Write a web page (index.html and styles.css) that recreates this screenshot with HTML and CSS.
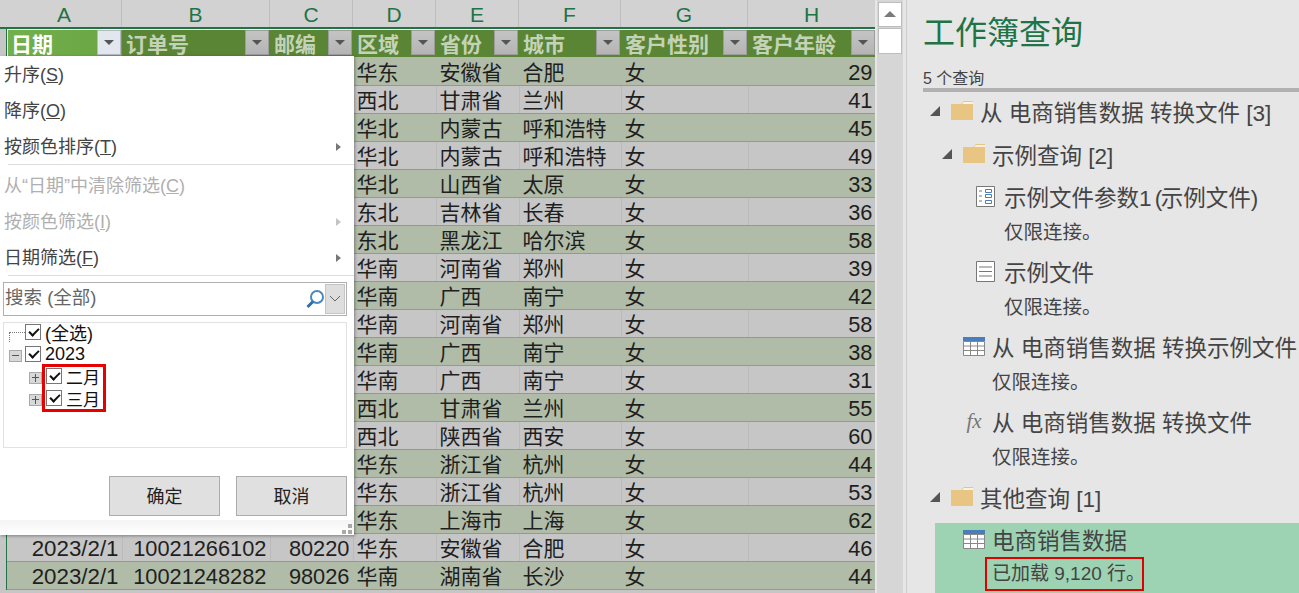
FILE: index.html
```html
<!DOCTYPE html>
<html lang="zh-CN">
<head>
<meta charset="utf-8">
<title>工作簿查询</title>
<link rel="stylesheet" href="styles.css">
</head>
<body>
<div class="app">
  <section class="sheet">
    <div class="col-head">
      <div class="corner"></div>
      <div class="ch a active">A</div><div class="ch b">B</div><div class="ch c">C</div><div class="ch d">D</div><div class="ch e">E</div><div class="ch f">F</div><div class="ch g">G</div><div class="ch h">H</div>
    </div>
    <div class="table-wrap">
      <table class="grid">
        <colgroup><col class="a"><col class="b"><col class="c"><col class="d"><col class="e"><col class="f"><col class="g"><col class="h"></colgroup>
        <thead><tr>
          <th class="active-th"><span>日期</span><i class="fbtn on"></i></th>
          <th><span>订单号</span><i class="fbtn"></i></th>
          <th><span>邮编</span><i class="fbtn"></i></th>
          <th><span>区域</span><i class="fbtn"></i></th>
          <th><span>省份</span><i class="fbtn"></i></th>
          <th><span>城市</span><i class="fbtn"></i></th>
          <th><span>客户性别</span><i class="fbtn"></i></th>
          <th><span>客户年龄</span><i class="fbtn"></i></th>
        </tr></thead>
        <tbody>
          <tr><td></td><td></td><td></td><td>华东</td><td>安徽省</td><td>合肥</td><td>女</td><td class="n">29</td></tr>
          <tr><td></td><td></td><td></td><td>西北</td><td>甘肃省</td><td>兰州</td><td>女</td><td class="n">41</td></tr>
          <tr><td></td><td></td><td></td><td>华北</td><td>内蒙古</td><td>呼和浩特</td><td>女</td><td class="n">45</td></tr>
          <tr><td></td><td></td><td></td><td>华北</td><td>内蒙古</td><td>呼和浩特</td><td>女</td><td class="n">49</td></tr>
          <tr><td></td><td></td><td></td><td>华北</td><td>山西省</td><td>太原</td><td>女</td><td class="n">33</td></tr>
          <tr><td></td><td></td><td></td><td>东北</td><td>吉林省</td><td>长春</td><td>女</td><td class="n">36</td></tr>
          <tr><td></td><td></td><td></td><td>东北</td><td>黑龙江</td><td>哈尔滨</td><td>女</td><td class="n">58</td></tr>
          <tr><td></td><td></td><td></td><td>华南</td><td>河南省</td><td>郑州</td><td>女</td><td class="n">39</td></tr>
          <tr><td></td><td></td><td></td><td>华南</td><td>广西</td><td>南宁</td><td>女</td><td class="n">42</td></tr>
          <tr><td></td><td></td><td></td><td>华南</td><td>河南省</td><td>郑州</td><td>女</td><td class="n">58</td></tr>
          <tr><td></td><td></td><td></td><td>华南</td><td>广西</td><td>南宁</td><td>女</td><td class="n">38</td></tr>
          <tr><td></td><td></td><td></td><td>华南</td><td>广西</td><td>南宁</td><td>女</td><td class="n">31</td></tr>
          <tr><td></td><td></td><td></td><td>西北</td><td>甘肃省</td><td>兰州</td><td>女</td><td class="n">55</td></tr>
          <tr><td></td><td></td><td></td><td>西北</td><td>陕西省</td><td>西安</td><td>女</td><td class="n">60</td></tr>
          <tr><td></td><td></td><td></td><td>华东</td><td>浙江省</td><td>杭州</td><td>女</td><td class="n">44</td></tr>
          <tr><td></td><td></td><td></td><td>华东</td><td>浙江省</td><td>杭州</td><td>女</td><td class="n">53</td></tr>
          <tr><td></td><td></td><td></td><td>华东</td><td>上海市</td><td>上海</td><td>女</td><td class="n">62</td></tr>
          <tr><td class="n dt">2023/2/1</td><td class="n">10021266102</td><td class="n">80220</td><td>华东</td><td>安徽省</td><td>合肥</td><td>女</td><td class="n">46</td></tr>
          <tr><td class="n dt">2023/2/1</td><td class="n">10021248282</td><td class="n">98026</td><td>华南</td><td>湖南省</td><td>长沙</td><td>女</td><td class="n">44</td></tr>
        </tbody>
      </table>
    </div>

    <div class="popup">
      <div class="menu-item">升序(<u>S</u>)</div>
      <div class="menu-item">降序(<u>O</u>)</div>
      <div class="menu-item arrow">按颜色排序(<u>T</u>)</div>
      <div class="sep"></div>
      <div class="menu-item off clear">从“日期”中清除筛选(<u>C</u>)</div>
      <div class="menu-item off arrow">按颜色筛选(<u>I</u>)</div>
      <div class="menu-item arrow">日期筛选(<u>F</u>)</div>
      <div class="sep"></div>
      <div class="search">
        <span class="search-text">搜索 (全部)</span>
        <svg class="lens" width="20" height="20" viewBox="0 0 20 20"><circle cx="12" cy="8" r="6" fill="none" stroke="#4a88c0" stroke-width="2"/><path d="M8 12.500 2.500 18" stroke="#2f6ea8" stroke-width="3" fill="none"/></svg>
        <span class="drop"><svg width="14" height="8" viewBox="0 0 14 8"><path d="M2 1l5 5 5-5" fill="none" stroke="#666" stroke-width="1"/></svg></span>
      </div>
      <div class="tree">
        <div class="tree-row lvl1 first"><i class="dots"></i><i class="check"></i><span>(全选)</span></div>
        <div class="tree-row lvl1"><i class="exp minus"></i><i class="check"></i><span>2023</span></div>
        <div class="months">
          <div class="tree-row"><i class="exp plus"></i><i class="check"></i><span>二月</span></div>
          <div class="tree-row"><i class="exp plus"></i><i class="check"></i><span>三月</span></div>
        </div>
      </div>
      <div class="actions">
        <button class="btn">确定</button>
        <button class="btn">取消</button>
      </div>
      <div class="grip"><svg width="12" height="12" viewBox="0 0 12 12"><path fill="#a8a8a8" d="M7 1h4v4H7zM1 7h4v4H1zM7 7h4v4H7z"/></svg></div>
    </div>
  </section>

  <div class="scrollbar">
    <div class="sb-up"><svg width="12" height="7" viewBox="0 0 12 7"><path d="M6 0l6 6H0z" fill="#7a7a7a"/></svg></div>
    <div class="sb-thumb"></div>
  </div>

  <aside class="panel">
    <h1 class="panel-title">工作簿查询</h1>
    <div class="count">5 个查询</div>
    <div class="queries">
      <div class="row folder l0"><i class="tri"></i><svg class="fold" width="22" height="19" viewBox="0 0 22 19"><path fill="#e9c583" d="M0 3h10l3-3h9v19H0z"/><path fill="#fbf3e2" d="M13 1l-2 2h11V1z"/></svg><span>从 电商销售数据 转换文件 [3]</span></div>
      <div class="row folder l1"><i class="tri"></i><svg class="fold" width="22" height="19" viewBox="0 0 22 19"><path fill="#e9c583" d="M0 3h10l3-3h9v19H0z"/><path fill="#fbf3e2" d="M13 1l-2 2h11V1z"/></svg><span>示例查询 [2]</span></div>
      <div class="item l2">
        <div class="row"><svg class="ico" width="19" height="21" viewBox="0 0 19 21"><path fill="#fff" stroke="#777" d="M.5.5h18v20H.5z"/><path stroke="#777" d="M3 5h3M3 10h3M3 15h3"/><path fill="none" stroke="#4a7ebb" d="M9.500 3.500h6v3h-6zM9.500 8.500h6v3h-6zM9.500 14.500h6v3h-6z"/></svg><span>示例文件参数<span class="tight">1 (</span>示例文件)</span></div>
        <div class="sub">仅限连接。</div>
      </div>
      <div class="item l2">
        <div class="row"><svg class="ico" width="19" height="21" viewBox="0 0 19 21"><path fill="#fff" stroke="#777" d="M.5.5h18v20H.5z"/><path stroke="#777" d="M3 6h13M3 10.500h13M3 15h13"/></svg><span>示例文件</span></div>
        <div class="sub">仅限连接。</div>
      </div>
      <div class="item l1b">
        <div class="row"><svg class="ico tbl" width="22" height="19" viewBox="0 0 22 19"><path fill="#fff" d="M1 5h20v13H1z"/><path fill="#4a7ebb" d="M0 0h22v4H0z"/><path fill="none" stroke="#888" d="M.5 4.500h21v14H.5zM.5 9h21M.5 13.500h21M7.500 4.500v14M14.500 4.500v14"/></svg><span>从 电商销售数据 转换示例文件</span></div>
        <div class="sub">仅限连接。</div>
      </div>
      <div class="item l1b">
        <div class="row"><span class="fx">fx</span><span>从 电商销售数据 转换文件</span></div>
        <div class="sub">仅限连接。</div>
      </div>
      <div class="row folder l0"><i class="tri"></i><svg class="fold" width="22" height="19" viewBox="0 0 22 19"><path fill="#e9c583" d="M0 3h10l3-3h9v19H0z"/><path fill="#fbf3e2" d="M13 1l-2 2h11V1z"/></svg><span>其他查询 [1]</span></div>
      <div class="item selected">
        <div class="row"><svg class="ico tbl" width="22" height="19" viewBox="0 0 22 19"><path fill="#fff" d="M1 5h20v13H1z"/><path fill="#4a7ebb" d="M0 0h22v4H0z"/><path fill="none" stroke="#888" d="M.5 4.500h21v14H.5zM.5 9h21M.5 13.500h21M7.500 4.500v14M14.500 4.500v14"/></svg><span>电商销售数据</span></div>
        <div class="sub"><span class="mark">已加载 9,120 行。</span></div>
      </div>
    </div>
  </aside>
</div>
</body>
</html>
```
FILE: styles.css
```css
* { box-sizing: border-box; }
html, body { margin: 0; height: 100%; overflow: hidden; }
body {
  font-family: "Liberation Sans", "Noto Sans CJK SC", sans-serif;
  color: #222;
  background: #e6e6e6;
}
.app { display: flex; width: 1299px; height: 593px; overflow: hidden; }

/* sheet */
.sheet { position: relative; width: 875px; height: 593px; flex: none; overflow: hidden; background: #c6c6c6; }
.col-head { display: flex; height: 29px; background: #d2d2d2; border-bottom: 2px solid #217346; }
.corner { width: 7px; flex: none; }
.ch { flex: none; text-align: center; font-size: 21px; line-height: 30px; color: #217346; border-right: 1px solid #bdbdbd; }
.ch.a { width: 115px; } .ch.b { width: 148px; } .ch.c { width: 83px; } .ch.d { width: 83px; }
.ch.e { width: 83px; } .ch.f { width: 102px; } .ch.g { width: 127px; } .ch.h { width: 128px; }

.table-wrap { padding-left: 7px; position: relative; }
.table-wrap::before { content: ""; position: absolute; left: 6px; top: 0; bottom: 0; width: 2px; background: #217346; }
.grid { position: relative; table-layout: fixed; border-collapse: collapse; width: 869px; }
col.a { width: 115px; } col.b { width: 148px; } col.c { width: 83px; } col.d { width: 83px; }
col.e { width: 83px; } col.f { width: 102px; } col.g { width: 127px; } col.h { width: 128px; }
.grid th {
  height: 28px; padding: 0; background: #5a8534; color: #c4d3b8;
  font-size: 21px; font-weight: 700; text-align: left; position: relative;
  font-family: "Noto Sans CJK SC", sans-serif; overflow: hidden;
  box-shadow: inset 0 1px 0 #f4f4f4;
}
.grid th.active-th { background: linear-gradient(90deg, #73b04b, #6aa444); color: #fff; box-shadow: inset 1px 1px 0 #f4f4f4; }
.grid th span { display: block; padding-left: 4px; line-height: 26px; white-space: nowrap; }
.fbtn {
  position: absolute; right: 1px; top: 1px; width: 24px; height: 25px;
  background: linear-gradient(#c4c4c4, #b4b4b4); border: 1px solid #9c9c9c;
}
.fbtn::after {
  content: ""; position: absolute; left: 6px; top: 9px;
  border: 5px solid transparent; border-top: 5px solid #555; border-bottom: 0;
}
.fbtn.on { background: #e2e6ee; border-color: #b5b8c0; }
.grid td {
  height: 28px; padding: 4px 3px 0; font-size: 21px; line-height: 22px;
  border-right: 1px solid #bababa; border-bottom: 1px solid #86a86a;
  white-space: nowrap; overflow: hidden; color: #1f1f1f;
  font-family: "Liberation Sans", "Noto Sans CJK SC", sans-serif;
}
.grid td.n { text-align: right; font-size: 21.800px; }
.grid td.dt { font-size: 22.300px; }
.grid tbody tr:nth-child(odd) td { background: #b0bba8; border-right-color: #b0bba8; }
.grid tbody tr:nth-child(even) td { background: #c6c6c6; }

/* filter popup */
.popup {
  position: absolute; left: 0; top: 56px; width: 354px; height: 479px;
  background: #fff; box-shadow: 1px 1px 3px rgba(0,0,0,.35);
  font-family: "Liberation Sans", "Noto Sans CJK SC", sans-serif;
}
.menu-item {
  position: relative; height: 36px; padding-left: 4px;
  font-size: 18px; line-height: 38px; color: #444; white-space: nowrap;
}
.menu-item.off { color: #b0b0b0; }
.menu-item.clear { height: 34px; margin-top: 4px; line-height: 34px; }
.menu-item.arrow::after {
  content: ""; position: absolute; right: 13px; top: 15px;
  border: 4px solid transparent; border-left: 5px solid #777; border-right: 0;
}
.menu-item.off.arrow::after { border-left-color: #c4c4c4; }
.sep { height: 1px; margin: 0 0 0 8px; background: #dcdcdc; }
.search {
  display: flex; align-items: center; height: 34px; margin: 6px 7px 0 3px;
  border: 1px solid #b0b0b0; padding-left: 1px;
}
.search-text { flex: 1; font-size: 18.500px; line-height: 26px; padding-bottom: 2px; color: #666; }
.lens { margin-right: 0; }
.drop { display: flex; align-items: center; justify-content: center; width: 20px; height: 30px; background: #dedede; border: 1px solid #c4c4c4; margin-right: 1px; }
.tree {
  position: relative; height: 126px; margin: 6px 7px 0 3px; border: 1px solid #e2e2e2;
}
.tree-row { display: flex; align-items: center; height: 22px; font-size: 18px; color: #111; gap: 4px; }
.tree-row.first { margin-top: -2px; }
.lvl1 { padding-left: 5px; }
.dots { width: 16px; height: 10px; border-left: 1px dotted #777; border-top: 1px dotted #777; flex: none; margin-top: 10px; margin-right: -4px; }
.exp {
  position: relative; flex: none; width: 13px; height: 12px; margin-right: -1px; margin-top: 3px;
  background: #d8d8d8; border: 1px solid #aaa;
}
.exp::before { content: ""; position: absolute; left: 2px; right: 2px; top: 4px; height: 1px; background: #555; }
.exp.plus::after { content: ""; position: absolute; top: 1px; bottom: 1px; left: 5px; width: 1px; background: #555; }
.check {
  position: relative; flex: none; width: 16px; height: 16px; background: #fff; border: 1px solid #777;
}
.check::after {
  content: ""; position: absolute; left: 3px; top: 3px; width: 8px; height: 4px;
  border-left: 2px solid #111; border-bottom: 2px solid #111; transform: rotate(-45deg);
}
.months { position: relative; margin-left: 25px; }
.months .tree-row span { font-size: 17px; }
.months .tree-row .exp { margin-right: 0; }
.months::after {
  content: ""; position: absolute; left: 13px; top: -1px; width: 58px; height: 42px;
  border: 3px solid #e60000;
}
.actions { display: flex; justify-content: flex-end; gap: 16px; margin: 28px 7px 0 0; }
.btn {
  width: 111px; height: 40px; padding: 0 0 2px; background: #e0e0e0; border: 1px solid #ababab;
  font-family: "Noto Sans CJK SC", sans-serif; font-size: 18px; color: #222;
}
.grip {
  position: absolute; left: 0; right: 0; bottom: 0; height: 15px; padding-right: 1px;
  display: flex; justify-content: flex-end; align-items: flex-end;
  background: linear-gradient(#f4f4f4, #ffffff);
}

/* scrollbar */
.scrollbar { flex: none; width: 29px; height: 593px; margin-left: 2px; padding: 2px 1px 0 1px; background: #d6d6d6; border-right: 3px solid #e6e6e6; }
.sb-up { display: flex; align-items: center; justify-content: center; width: 24px; height: 25px; background: #fff; border: 1px solid #bdbdbd; }
.sb-thumb { width: 24px; height: 26px; margin-top: 1px; background: #fff; border: 1px solid #bdbdbd; }

/* queries panel */
.panel { flex: 1; min-width: 0; height: 593px; background: #e6e6e6; padding-left: 16px; border-left: 1px solid #cdcdcd; overflow: hidden; }
.panel-title { margin: 0; height: 68px; font-size: 32px; line-height: 60px; font-weight: 400; color: #217346; font-family: "Noto Sans CJK SC", sans-serif; }
.count { height: 24px; font-size: 16px; line-height: 21px; color: #444; border-bottom: 4px solid #b1b1b1; }
.queries { margin-left: -17px; color: #444; }
.row { display: flex; align-items: center; height: 42px; padding-bottom: 6px; font-size: 22.500px; white-space: nowrap; }
.row.folder { height: 43px; }
.l0 { padding-left: 24px; }
.l1 { padding-left: 36px; }
.l2 { padding-left: 70px; }
.l1b { padding-left: 57px; }
.tri { flex: none; width: 0; height: 0; border-style: solid; border-width: 0 0 10px 10px; border-color: transparent transparent #555 transparent; margin-right: 11px; }
.fold { flex: none; margin-right: 7px; }
.ico { flex: none; margin-right: 9px; }
.ico.tbl { margin-right: 7px; }
.fx { flex: none; width: 22px; margin-right: 7px; font-family: "Liberation Serif", serif; font-style: italic; color: #777; font-size: 21px; text-align: center; }
.tight { letter-spacing: -1.500px; }
.sub { height: 33px; padding-left: 28px; font-size: 19.500px; line-height: 25px; white-space: nowrap; }
.selected { margin: 2px 0 0 29px; padding-left: 28px; background: #9dd3b3; height: 71px; }
.selected .row { height: 38px; }
.selected .sub { height: 33px; padding-left: 29px; }
.mark { display: block; width: 159px; height: 34px; margin: -4px 0 0 -7px; padding-left: 5px; font-size: 19px; line-height: 30px; border: 2px solid #e00000; }
.l1b .sub { padding-left: 29px; }
```
